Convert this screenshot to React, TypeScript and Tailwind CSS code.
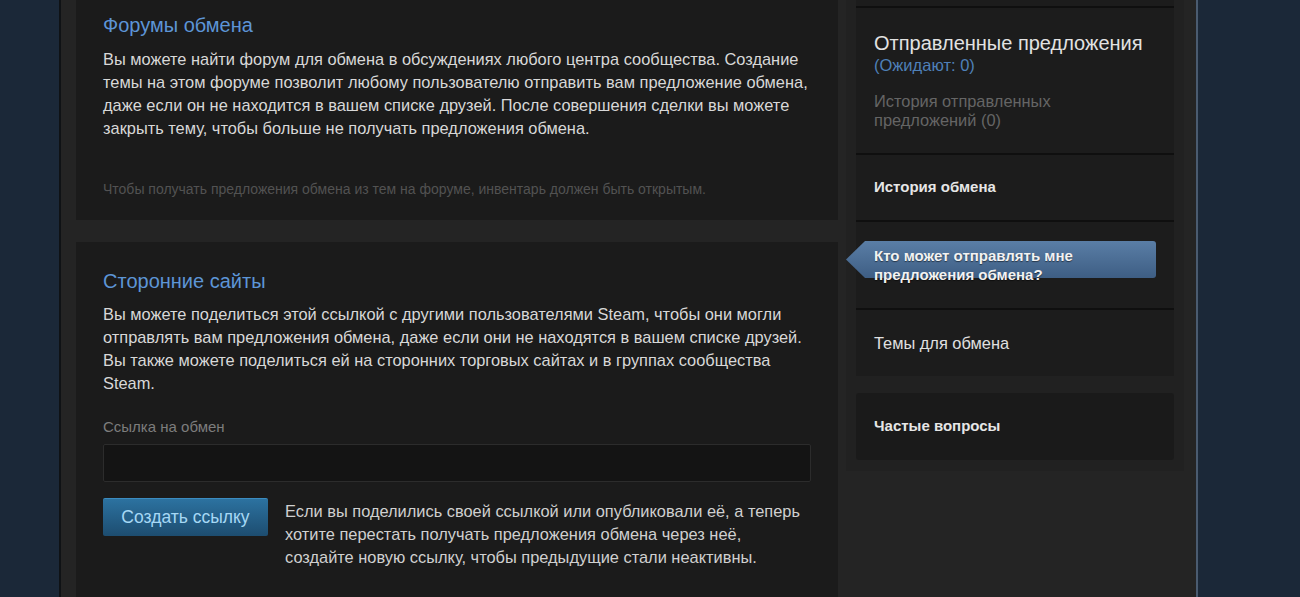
import React from "react";

const font = { fontFamily: '"Liberation Sans", Arial, sans-serif' };

export default function App() {
  return (
    <div
      className="h-[597px] w-[1300px] overflow-hidden bg-[#1b2838]"
      style={font}
    >
      <div className="ml-[59px] flex h-full w-[1139px] border-l-2 border-r-2 border-l-[#0f1215] border-r-[#4a5b70] bg-[#242424] pl-[15px] pr-[12px]">
        {/* main column */}
        <div className="flex w-[762px] shrink-0 flex-col gap-[22px]">
          <div className="h-[220px] shrink-0 bg-[#1b1b1b] px-[27px] pt-[13px]">
            <h2 className="text-[20px] leading-[24px] text-[#5d95d6]">Форумы обмена</h2>
            <p className="mt-[11px] whitespace-nowrap text-[16.4px] leading-[23px] text-[#d8d8d8]">
              Вы можете найти форум для обмена в обсуждениях любого центра сообщества. Создание
              <br />
              темы на этом форуме позволит любому пользователю отправить вам предложение обмена,
              <br />
              даже если он не находится в вашем списке друзей. После совершения сделки вы можете
              <br />
              закрыть тему, чтобы больше не получать предложения обмена.
            </p>
            <p className="mt-[40px] whitespace-nowrap text-[14px] leading-[18px] text-[#525252]">
              Чтобы получать предложения обмена из тем на форуме, инвентарь должен быть открытым.
            </p>
          </div>

          <div className="h-[400px] shrink-0 bg-[#1b1b1b] px-[27px] pt-[27px]">
            <h2 className="text-[20px] leading-[24px] text-[#5d95d6]">Сторонние сайты</h2>
            <p className="mt-[10px] whitespace-nowrap text-[16.4px] leading-[23px] text-[#d8d8d8]">
              Вы можете поделиться этой ссылкой с другими пользователями Steam, чтобы они могли
              <br />
              отправлять вам предложения обмена, даже если они не находятся в вашем списке друзей.
              <br />
              Вы также можете поделиться ей на сторонних торговых сайтах и в группах сообщества
              <br />
              Steam.
            </p>
            <div className="mt-[22px] text-[15px] leading-[20px] text-[#7d7d7d]">Ссылка на обмен</div>
            <div className="mt-[7px] h-[38px] w-[708px] rounded-[2px] border border-[#2c2c2c] bg-[#141414]" />
            <div className="mt-[16px] flex gap-[17px]">
              <button className="h-[38px] w-[165px] shrink-0 rounded-[2px] border-t border-t-[#3b8cc0] bg-gradient-to-b from-[#2c72a0] to-[#1d4d70] text-[17.5px] text-[#a6d8f5]">
                Создать ссылку
              </button>
              <p className="mt-[2px] whitespace-nowrap text-[16.4px] leading-[23px] text-[#d0d0d0]">
                Если вы поделились своей ссылкой или опубликовали её, а теперь
                <br />
                хотите перестать получать предложения обмена через неё,
                <br />
                создайте новую ссылку, чтобы предыдущие стали неактивны.
              </p>
            </div>
          </div>
        </div>

        {/* sidebar */}
        <div className="ml-[8px] flex h-[471px] w-[338px] shrink-0 flex-col bg-[#212121] px-[10px] pb-[11px]">
          <div className="h-[6px] bg-[#1c1c1c]" />
          <div className="h-[2px] bg-[#0f0f0f]" />
          <div className="h-[145px] bg-[#1c1c1c] px-[18px] pt-[23px]">
            <div className="whitespace-nowrap text-[20px] leading-[24px] text-[#e2e2e2]">
              Отправленные предложения
            </div>
            <div className="text-[16.5px] leading-[20px] text-[#4f80b8]">(Ожидают: 0)</div>
            <div className="mt-[17px] text-[16.4px] leading-[19px] text-[#656565]">
              История отправленных
              <br />
              предложений (0)
            </div>
          </div>
          <div className="h-[2px] bg-[#0f0f0f]" />
          <div className="flex h-[65px] items-center bg-[#1c1c1c] px-[18px]">
            <span className="text-[15px] font-bold text-[#e6e6e6]">История обмена</span>
          </div>
          <div className="h-[2px] bg-[#0f0f0f]" />
          <div className="h-[86px] bg-[#1c1c1c] pt-[19px]">
            <div className="ml-[-10px] flex w-[310px]">
              <svg width="19" height="37" viewBox="0 0 19 37" className="shrink-0">
                <defs>
                  <linearGradient id="tg" x1="0" y1="0" x2="0" y2="1">
                    <stop offset="0" stopColor="#5a7ea6" />
                    <stop offset="1" stopColor="#3e5e84" />
                  </linearGradient>
                </defs>
                <polygon points="0,18.5 19,0 19,37" fill="url(#tg)" />
              </svg>
              <div className="h-[37px] flex-1 rounded-r-[3px] bg-gradient-to-b from-[#5a7ea6] to-[#3e5e84] pl-[9px] pt-[5px]">
                <div className="whitespace-nowrap text-[15px] font-bold leading-[19px] text-[#f2f2f2] [text-shadow:0_1px_1px_rgba(0,0,0,0.5)]">
                  Кто может отправлять мне
                  <br />
                  предложения обмена?
                </div>
              </div>
            </div>
          </div>
          <div className="h-[2px] bg-[#0f0f0f]" />
          <div className="flex h-[66px] items-center bg-[#1c1c1c] px-[18px]">
            <span className="text-[16.4px] text-[#e0e0e0]">Темы для обмена</span>
          </div>
          <div className="mt-[17px] flex h-[67px] items-center rounded-[3px] bg-[#1a1a1a] px-[18px]">
            <span className="text-[15px] font-bold text-[#e6e6e6]">Частые вопросы</span>
          </div>
        </div>
      </div>
    </div>
  );
}
